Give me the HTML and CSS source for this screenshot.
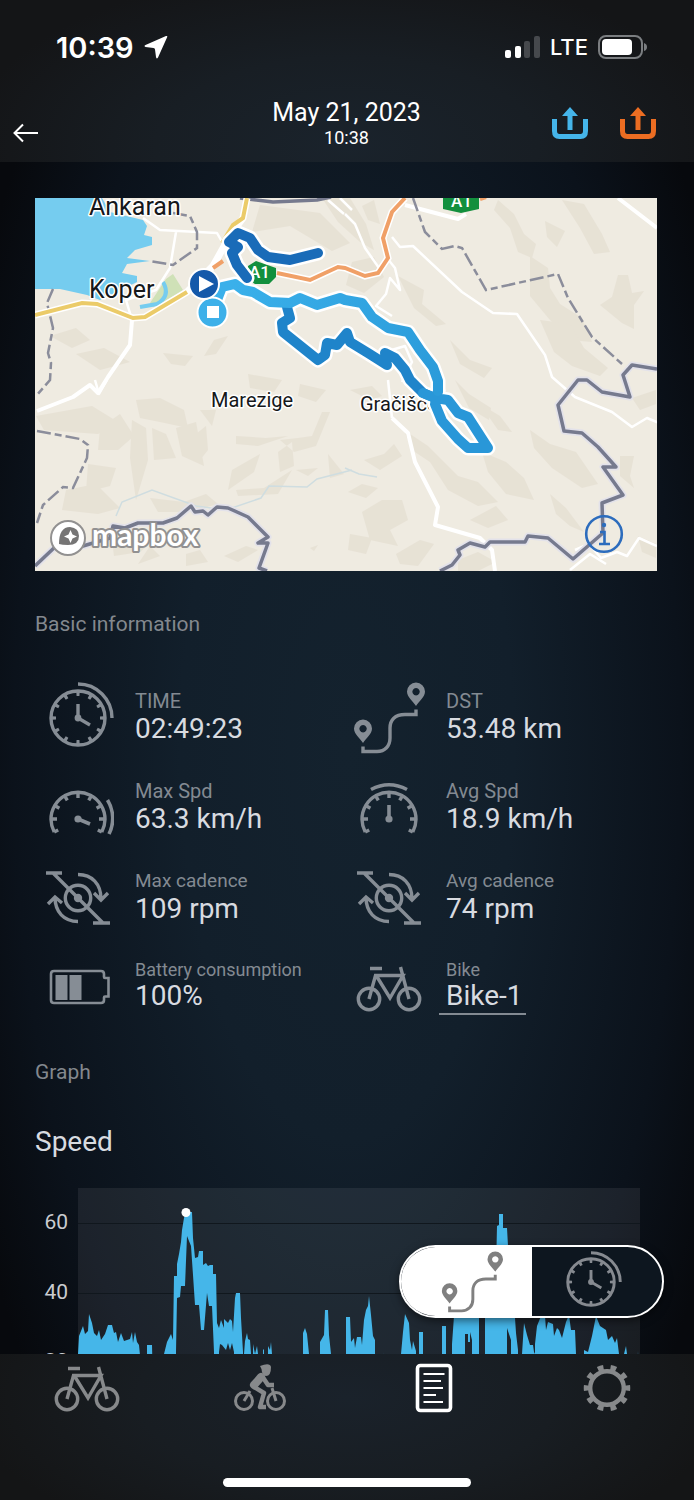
FILE: index.html
```html
<!DOCTYPE html>
<html lang="en">
<head>
  <meta charset="UTF-8">
  <title>Ride details</title>
  <meta name="viewport" content="width=device-width, initial-scale=1.0">
  <link rel="stylesheet" href="styles.css">
</head>
<body>

  <!-- Shared icons, all centred on 0,0 -->
  <svg class="sprite" aria-hidden="true">
    <symbol id="i-clock" viewBox="-36 -36 72 72">
      <circle r="27" fill="none" stroke="currentColor" stroke-width="3.4"/>
      <circle r="24" fill="none" stroke="currentColor" stroke-width="4" pathLength="120" stroke-dasharray="2.6 7.4" stroke-dashoffset="1.3"/>
      <path d="M0-14V0L12 7M0-34A34 34 0 0 1 34 0" fill="none" stroke="currentColor" stroke-width="3.4"/>
      <circle r="3.4" fill="currentColor"/>
    </symbol>
    <symbol id="i-dial" viewBox="-36 -36 72 72">
      <path d="M-23.8 24A27 27 0 1 1 23.8 24M-23.8 24l4-2M23.8 24l-4-2M-27 11h6M27 11h-6M-23.4-2.5l4.8 2.8M23.4-2.5l-4.8 2.8M-13.5-12.4l2.8 4.8M13.5-12.4l-2.8 4.8M0-16v6" fill="none" stroke="currentColor" stroke-width="3.4"/>
      <circle cy="11" r="3.6" fill="currentColor"/>
    </symbol>
    <symbol id="i-route" viewBox="-36 -36 72 72">
      <path d="M27-8.5V-3.5H16C6-3.5 1 2 1 10V20C1 28-4 33.5-12 33.5H-26V28.5" fill="none" stroke="currentColor" stroke-width="3.4"/>
      <path fill="currentColor" fill-rule="evenodd" d="M27-12C24-17 18-21 18-26.500A9 9 0 0 1 36-26.500C36-21 30-17 27-12ZM27-30a3.700 3.700 0 1 0 .1 0ZM-26 25C-29 20-35 16-35 10.500A9 9 0 0 1-17 10.500C-17 16-23 20-26 25ZM-26 7a3.700 3.700 0 1 0 .1 0Z"/>
    </symbol>
    <symbol id="i-cadence" viewBox="-36 -36 72 72">
      <g fill="none" stroke="currentColor" stroke-width="3.4">
        <circle r="12.700"/>
        <path d="M-32-25h16M-25-25L25 25M15 25h17M0-23.500C14-23.500 23-14 23 1M16-5l7 7 7-7M0 23.500C-14 23.500-23 14-23-1M-30 6l7-7 7 6"/>
      </g>
      <circle r="4.200" fill="currentColor"/>
    </symbol>
    <symbol id="i-battery" viewBox="-36 -36 72 72">
      <path d="M-24-17H23q3 0 3 3v3q0 1 1 1h3.500V8.500H27q-1 0-1 1V12q0 3-3 3H-24q-3 0-3-3V-14q0-3 3-3Z" fill="none" stroke="currentColor" stroke-width="2.600"/>
      <path d="M-22.500-13h12v25h-12zM-8.500-13h12v25h-12z" fill="currentColor"/>
    </symbol>
    <symbol id="i-bike" viewBox="-36 -36 72 72">
      <g fill="none" stroke="currentColor" stroke-width="3.400">
        <circle cx="-20" cy="11" r="10.700"/>
        <circle cx="20" cy="11" r="10.700"/>
        <path d="M-20 11L-13.500-12.500H14L1 10-12.500-12M11.500-21L20 11M-19-19.500h12"/>
      </g>
    </symbol>
    <symbol id="i-rider" viewBox="-36 -36 72 72">
      <g fill="none" stroke="currentColor" stroke-width="3">
        <circle cx="-16" cy="13" r="8.500"/>
        <circle cx="16" cy="13" r="8.500"/>
        <path d="M-16 13l6-10M16 13l-4-13"/>
      </g>
      <path d="M1-11L-6-3" stroke="currentColor" stroke-width="8" stroke-linecap="round"/>
      <path d="M-6-1L4 5 0 19h6M2-12l6 9h6" fill="none" stroke="currentColor" stroke-width="4.500" stroke-linejoin="round"/>
      <path d="M0-22q10-4 11 1 0 9-5 9-4 0-4.500-7Z" fill="currentColor"/>
    </symbol>
    <symbol id="i-list" viewBox="-36 -36 72 72">
      <rect x="-16.500" y="-22.500" width="33" height="45" rx="3" fill="none" stroke="currentColor" stroke-width="3.600"/>
      <path d="M-10.500-14h21M-10.500-7H7M-10.500 0H9M-10.500 7H2M-10.500 14H9" stroke="currentColor" stroke-width="1.800"/>
    </symbol>
    <symbol id="i-gear" viewBox="-36 -36 72 72">
      <circle r="16.800" fill="none" stroke="currentColor" stroke-width="4.400"/>
      <circle r="20.500" fill="none" stroke="currentColor" stroke-width="5.500" pathLength="100" stroke-dasharray="4.400 5.600" stroke-dashoffset="2.200"/>
    </symbol>
    <symbol id="i-share" viewBox="0 0 36 34">
      <path d="M2.500 13V25q0 5.500 5 5.500h21q5 0 5-5.500V13" fill="none" stroke="currentColor" stroke-width="5"/>
      <path d="M18 1l8 9h-5.500v14h-5V10H10z" fill="currentColor"/>
    </symbol>
  </svg>

  <header class="header">
    <div class="status">
      <div class="status-left">
        <span class="status-time">10:39</span>
        <svg class="location" viewBox="0 0 24 24"><path d="M22 1Q24 .5 23 2.500L14 22.500Q12.500 24.500 12 22L11 14.500Q11 13 9.500 13L1.500 12Q-.5 11 1.500 10Z" fill="#fff"/></svg>
      </div>
      <div class="status-right">
        <svg class="signal" viewBox="0 0 35 22">
          <rect y="14" width="6" height="8" rx="2" fill="#fff"/>
          <rect x="10" y="10" width="6" height="12" rx="2" fill="#fff"/>
          <rect x="19" y="5" width="6" height="17" rx="2" fill="#46494d"/>
          <rect x="29" width="6" height="22" rx="2" fill="#46494d"/>
        </svg>
        <span class="network">LTE</span>
        <svg class="charge" viewBox="0 0 50 24">
          <rect x="1" y="1" width="43" height="22" rx="7" fill="none" stroke="#7b7e81" stroke-width="2"/>
          <rect x="4" y="4" width="30" height="16" rx="4" fill="#fff"/>
          <path d="M46 8q3 1 3 4t-3 4z" fill="#7b7e81"/>
        </svg>
      </div>
    </div>
    <nav class="nav">
      <button class="back" aria-label="Back">
        <svg viewBox="0 0 26 20"><path d="M25 10H2M10 1.500L1.500 10 10 18.500" fill="none" stroke="#fff" stroke-width="2"/></svg>
      </button>
      <div class="nav-title">
        <h1>May 21, 2023</h1>
        <p>10:38</p>
      </div>
      <div class="nav-actions">
        <button class="share blue" aria-label="Share"><svg><use href="#i-share"/></svg></button>
        <button class="share orange" aria-label="Share to Strava"><svg><use href="#i-share"/></svg></button>
      </div>
    </nav>
  </header>

  <main class="content">
    <div class="map">
      <svg viewBox="35 198 622 373" role="img" aria-label="Map of the ride">
        <defs>
          <linearGradient id="ride" gradientUnits="userSpaceOnUse" x1="440" y1="380" x2="230" y2="290">
            <stop offset="0" stop-color="#2b9bda"/>
            <stop offset="1" stop-color="#3ab0ea"/>
          </linearGradient>
        </defs>
        <rect x="35" y="198" width="623" height="373" fill="#efebe1"/>

        <!-- Hills -->
        <g fill="#ddd5c5" opacity=".4">
          <path d="M260 205l60 8 30 30-18 8-42-25-38 6zM322 198h28l16 26 8 26-14-8-22-20zM352 262l22-5 10 20-20 16-18-8z"/>
          <path d="M498 200l16 14 10 20 12 10-4 14-14-6-8-24-16-18zM545 221l20 10-8 16-10-10zM562 200l22 4 18 30 8 18-16 2-14-26z"/>
          <path d="M618 275l10 0 4 18 12-2-10 14 0 24-12-6-22-18 12-8zM530 256l18 12 2 20 10 16 22 14 10 24-22-2-20-20-20-24z"/>
          <path d="M398 276l26 14-2 14 24 20-10 2-22-18zM540 320l30 4 14 24 24 20-8 8-28-10-18-14zM450 340l20 20 22 8-8 10-24-14z"/>
          <path d="M50 336l26-8 14 12-18 8zM76 354l28-6 26 14-30 8zM163 353l30 3-8 10-14-2zM214 340l14-4-12 18-12 2zM248 374l34 6-8 12-24-4z"/>
          <path d="M36 416l56-10 26 16-20 12-54-4zM100 428l20-14 14 22-16 14-20 0zM136 400l24-2 24 12 4 18-28-6-20-4z"/>
          <path d="M132 420l14 8 2 32-12 40-6-42zM152 428l14 6 10 24-22 2zM176 428l20-6 8 44-22-10zM196 434l10-8 2 24-8 10z"/>
          <path d="M200 410l16 0-4 16zM236 436l30 2 22-2-30 10-22-2zM280 440l14 12 22-6 14-34-8 0-10 24-14 2zM278 452l14-10 2 24-14 6z"/>
          <path d="M232 470l28-16-6 18-26 18zM236 490l28-2 28-18-14 24-40 2zM328 454l16 20-14 4zM296 470l22-2-10 8z"/>
          <path d="M88 464l28 4-6 18-24 6zM66 490l30-6 24 24-22 6-36-4zM150 498l34 4 22-8 12 10-30 8-30 0zM112 540l26 4 18-6-16 14-26 4z"/>
          <path d="M150 546l10 10-22 8zM186 554l14-4 8 12-22 4zM224 556l22-10 12 4-20 12zM310 548l8-3-4 6z"/>
          <path d="M404 430l24 16 30 30 20 6 20 20-20 4-30-16-18-28-18-12zM455 380l14 14 22 14-2 12-20-12zM482 452l24 10 18 16 10 22-28-6-18-22z"/>
          <path d="M480 404l20 12 12 16-14-2zM530 430l20 14 26 8 22 32-16 4-30-20-18-20zM550 494l16 14 18 24-14-6-14-12zM620 456l14 0-4 20 4 12-14-12z"/>
          <path d="M362 512l20-12 20 0 6 20-18 10 8 16-28-6zM350 534l22 4-6 16-18-4zM396 554l24-14 14 4-16 22-18-2zM458 560l20-8 18 10-18 9h-20z"/>
          <path d="M348 492l14-8 16 4-12 10zM364 460l20-6 10-10 8 12-22 14zM632 398l24-8 0 14-16 6zM638 536l18 8 0 14-14-6z"/>
          <path d="M350 390l22-4 10 10-12 4zM300 384l26 6-10 12-18-6zM470 520l26-14 12 14-20 8zM362 206l12-6 6 24-12-4z"/>
        </g>

        <!-- Sea and coast -->
        <path fill="#75ccef" d="M35 198h67l8 14 33 8 4 6-3 9 8 2v8l-17 5-8 8 23 3-23 3-5 9 15 3v6l-16 8-21 10-13-5-27-6H35z"/>
        <path fill="#cfe1b7" d="M150 303l16-24 7-5 10 16-18 11-12 6z"/>
        <path d="M163 282q8 14-6 22l-17 3" fill="none" stroke="#75ccef" stroke-width="4"/>

        <!-- Streams and minor roads -->
        <g fill="none" stroke="#cfdde0" stroke-width="1.500">
          <path d="M116 516l6-14 30-12 44 16 30 4 35-12 8-12 38 1 10-8 35-9M345 468l14 6 18 3"/>
        </g>
        <g fill="none" stroke="#fff" stroke-width="2.500" stroke-linejoin="round">
          <path d="M143 218l17 12 57 3 8 14M176 232l-6 36-14 22-30 10 6 20M392 237l8 10 13-1 49 46 31 21 24 1 28 41 7 22 23 20 37 15 20 15 15-9 12 5"/>
          <path d="M345 214l10 10 10 24 14 20 8-10 8 10 5 22-10-12-4 16-10 12 16 10M385 352l20-6 7 16-10 20M388 380l4 38"/>
          <path d="M340 198l12 12M575 550l14-6 12 14 16-6 10 4 12-18 18 8M570 570l20-16 16 10"/>
          <path d="M95 380l4 14 8-14M328 200l16 14"/>
        </g>
        <g fill="none" stroke="#fff" stroke-width="4" stroke-linejoin="round">
          <path d="M132 320l-2 25-22 32-10 16-8-8-17 12-36 14M405 205l53 14 8-5M618 198l39 30M392 418l16 15 7 29 23 45-3 18 45 13 12 12 3 21"/>
        </g>

        <!-- Administrative borders -->
        <g fill="none" stroke="#8b8d9b" stroke-width="2.500" stroke-dasharray="14 4 7 4">
          <path d="M173 213l17 3 7 16v16l-24 17-23-4M53 289l-6 14 6 25-5 25 3 10-1 17-13 15M37 431l43 8 8 6-1 13-14 30-10-1-20 18-6 18"/>
          <path d="M413 198l12 34 17 17 13-3 7 2 24 42 72-16 10 24 24 39 30 27"/>
        </g>
        <g fill="none" stroke-linejoin="round">
          <path stroke="#e3e2ea" stroke-width="7" d="M35 566l20-19 28-1 27-8 3-12 12 2 13-5 25 0 14-5 14-12 4 6 8-1 5 4 9-8 11 1 20 9 20 20-10 6h10l-9 25 8 3M440 571l12-6 8-10-2-5 12-7 15 4 5-5h35l3-6 20 2 25 21 30-26-1-30 21-8-20-28h13l-18-20-16-14-18-2-6-26 20-25h9l15 12 28 5-7-22 9-10 25 4"/>
          <path stroke="#767a8e" stroke-width="3.500" d="M35 566l20-19 28-1 27-8 3-12 12 2 13-5 25 0 14-5 14-12 4 6 8-1 5 4 9-8 11 1 20 9 20 20-10 6h10l-9 25 8 3M440 571l12-6 8-10-2-5 12-7 15 4 5-5h35l3-6 20 2 25 21 30-26-1-30 21-8-20-28h13l-18-20-16-14-18-2-6-26 20-25h9l15 12 28 5-7-22 9-10 25 4M240 198l33 4 44-2 14-3"/>
        </g>

        <!-- Main roads -->
        <g fill="none" stroke="#fff" stroke-width="7">
          <path d="M35 315l47-12 15 1 36 14 12-1 42-25 26-26 18-32 12-16 4-20M277 273l33 7 28-13 7 1 20 8 13-3 10-15-5-20 9-26 13-14"/>
        </g>
        <path d="M35 315l47-12 15 1 36 14 12-1 42-25M222 243l11-18 10-7 4-20" fill="none" stroke="#ebcb69" stroke-width="4"/>
        <path d="M213 268l10-7M277 273l33 7 28-13 7 1 20 8 13-3 10-15-5-20 9-26 13-14M480 199l6-2" fill="none" stroke="#f0a067" stroke-width="4"/>

        <path d="M248 266l8-5 20 7v9l-7 7h-14l-8-5zM443 198h36v11l-18 4-18-4z" fill="#128f3d"/>
        <g class="shield">
          <text x="249" y="278">A1</text>
          <text x="451" y="207">A1</text>
        </g>

        <g class="places">
          <text class="town" x="89" y="215">Ankaran</text>
          <text class="town" x="89" y="298">Koper</text>
          <text x="211" y="407">Marezige</text>
          <text x="360" y="411">Gračišče</text>
        </g>

        <!-- Ride track -->
        <g fill="none" stroke-linejoin="round" stroke-linecap="round">
          <g stroke="#fff" stroke-width="15">
            <path d="M318 253l-28 7-22-3-10-7-8-12-12-5-9 9 9 5-6 6 5 12 10 13"/>
            <path d="M287 307l3 11-8 5 1 9 35 28 7-5 2-12 10 2 10-12 3 9 18 11 19 12-2-12 10 5 10 12 5 10 13 13 12 5 13 2 10 13 10 4 20 31h-20l-10-9-16-18-7-17 3-13"/>
            <path d="M438 391V381L433 367 420 350 408 332 388 328 372 317 362 303 345 300 340 298 317 305 300 298 290 303 270 302 253 292 243 290 235 284 222 287 217 300 212 312"/>
          </g>
          <path stroke="#196bb8" stroke-width="10" d="M318 253l-28 7-22-3-10-7-8-12-12-5-9 9 9 5-6 6 5 12 10 13"/>
          <path stroke="#1f84ca" stroke-width="10" d="M287 307l3 11-8 5 1 9 35 28 7-5 2-12 10 2 10-12 3 9 18 11 19 12-2-12 10 5 10 12 5 10 13 13 12 5"/>
          <path stroke="#2997d8" stroke-width="10" d="M423 393l12 5 13 2 10 13 10 4 20 31h-20l-10-9-16-18-7-17 3-13"/>
          <path stroke="url(#ride)" stroke-width="10" d="M438 391V381L433 367 420 350 408 332 388 328 372 317 362 303 345 300 340 298 317 305 300 298 290 303 270 302 253 292 243 290 235 284 222 287 217 300 212 312"/>
        </g>
        <circle cx="212.500" cy="312.500" r="15" fill="#3db0e9" stroke="#fff" stroke-width="2"/>
        <path d="M207 306h12v12h-12z" fill="#fff"/>
        <circle cx="204" cy="284" r="15" fill="#1459aa" stroke="#fff" stroke-width="2"/>
        <path d="M199 276l15 8-15 8z" fill="#fff"/>

        <!-- Attribution -->
        <circle cx="68" cy="538" r="17" fill="#fff" stroke="#929191" stroke-width="2"/>
        <path d="M59 544q0-17 11-17 9 1 9 9 0 9-11 9-6 0-9-1z" fill="#767575"/>
        <path d="M70.500 530l2 4.500 4.500 2-4.500 2-2 4.500-2-4.500-4.500-2 4.500-2z" fill="#fff"/>
        <text class="mapbox" x="92" y="546">mapbox</text>
      </svg>
      <button class="map-info" aria-label="Map information">
        <svg viewBox="0 0 40 40">
          <circle cx="20" cy="20" r="17.800" fill="none" stroke="currentColor" stroke-width="2.600"/>
          <circle cx="20" cy="11" r="2.200" fill="currentColor"/>
          <path d="M16 18h4.500v11M15 30h11" fill="none" stroke="currentColor" stroke-width="2.600"/>
        </svg>
      </button>
    </div>

    <section>
      <h2>Basic information</h2>
      <dl class="stats">
        <div class="stat">
          <svg><use href="#i-clock"/></svg>
          <div class="stat-text"><dt>TIME</dt><dd>02:49:23</dd></div>
        </div>
        <div class="stat">
          <svg><use href="#i-route"/></svg>
          <div class="stat-text"><dt>DST</dt><dd>53.48 km</dd></div>
        </div>
        <div class="stat">
          <svg viewBox="-36 -36 72 72">
            <use href="#i-dial" x="-36" y="-36" width="72" height="72"/>
            <path d="M0 11l12 5M29.500-8A35 35 0 0 1 31 26" fill="none" stroke="currentColor" stroke-width="3.600"/>
          </svg>
          <div class="stat-text"><dt>Max Spd</dt><dd>63.3 km/h</dd></div>
        </div>
        <div class="stat">
          <svg viewBox="-36 -36 72 72">
            <use href="#i-dial" x="-36" y="-36" width="72" height="72"/>
            <path d="M0 11V-3M-18-18.500Q0-28 18-18.500" fill="none" stroke="currentColor" stroke-width="3.600"/>
          </svg>
          <div class="stat-text"><dt>Avg Spd</dt><dd>18.9 km/h</dd></div>
        </div>
        <div class="stat cadence">
          <svg><use href="#i-cadence"/></svg>
          <div class="stat-text"><dt>Max cadence</dt><dd>109 rpm</dd></div>
        </div>
        <div class="stat cadence">
          <svg><use href="#i-cadence"/></svg>
          <div class="stat-text"><dt>Avg cadence</dt><dd>74 rpm</dd></div>
        </div>
        <div class="stat small">
          <svg><use href="#i-battery"/></svg>
          <div class="stat-text"><dt>Battery consumption</dt><dd>100%</dd></div>
        </div>
        <div class="stat small">
          <svg><use href="#i-bike"/></svg>
          <div class="stat-text"><dt>Bike</dt><dd><a href="#bike">Bike-1</a></dd></div>
        </div>
      </dl>
    </section>

    <section class="graph">
      <h2>Graph</h2>
      <h3>Speed</h3>
      <svg class="chart" viewBox="35 1188 622 200" role="img" aria-label="Speed over distance">
        <rect class="plot" x="78" y="1188" width="562" height="200"/>
        <path d="M78 1223.500h562M78 1293.500h562M78 1363.500h562" stroke="#10171d" stroke-width="1"/>
        <g class="axis">
          <text x="68" y="1229">60</text>
          <text x="68" y="1299">40</text>
          <text x="68" y="1368">20</text>
        </g>
        <g fill="#45b6e9">
          <path d="M78 1388v-34l1-18 4-10 2 8 3-3 1-17 3 9 2 10 3 3 2-6 2 10 4-6 3-9h4l2 8 2-1 2 10 3-9 3 8 6-2 2-7 1 11 2-11 2 10 2 3 1 10v34z"/>
          <path d="M147 1388v-43h5l1 43zM164 1388v-34l3-12 2-4 2-4 2 6 1-64h3v-12l2-10 2-12 1-12 2-12 2-6h6l1 26 2 20 3-1 1-6h4v14l3-2 2 3 2-1h3v9h3l1 49 2 5 2-8 3 8v-9l4 4 2-4 2 2 1 11 2-34 1-5h4l1 25 2 34v34h-9v-34l-2-9-2 7-2-7-2 7-4-5-2-1-1 8v34h-5v-34l-2-46h-3l-2-13-3 37h-3l-2-25h-4l-2-30-2-29-4-10-2 50h-4l-1 11-3 1-1 54v34z"/>
          <path d="M244 1388v-34l1-13 2-8 1 6 2 1 1 14v34zM253 1388v-44l2 10 2-8 1 8 1 34zM263 1388v-38l1-1v39zM268 1388v-42l2 4 1-8 1 12v34zM303 1388v-55l2-5 2 6 2 20v34zM320 1388v-46l4-7 1-25h3l1 25 2 19v34z"/>
          <path d="M346 1388v-71h4l1 25 3-4 1 10 2-11h4l1 8 2-25 2-10 2-4 1-10 2 19 2 21 2 4v48zM383 1388v-36l1 36zM401 1388v-34l2-22 2-18 4 9 1 17 2 10 1-9 3 10v37zM419 1388v-56h4v56zM442 1388v-62h4v62z"/>
          <path d="M452 1388v-44l2-28h25v72h-7v-48l-2-8v10h-2v-8h-3v24h-1v30zM485 1388v-72h10l2-90 2-1v-11h4v14h4l1 18 1 70 6 2 1 15 2 17v38h-7v-48l-4-12v60z"/>
          <path d="M522 1388v-34l2-31 3 12 3 10h3l1 7 1 2v-10l2-18 4-10h4l1 14 2-8 5 2 1 12 3-8 2 2 3 8 4-16 3-7 2 15h4l1 24v34zM579 1388v-36l1 36zM584 1388v-38l4 2 4-16 4-20 4 10 6 4 2 10 4-4 3 7 2-5 2 16v34zM624 1388v-34l2-8 1 8v34zM637 1388l1-37 1 37z"/>
        </g>
        <circle cx="186" cy="1212.500" r="4.500" fill="#fff"/>
      </svg>
    </section>
  </main>

  <footer class="footer">
    <div class="mode" role="group" aria-label="Graph axis">
      <button class="distance active" aria-label="Distance" aria-pressed="true"><svg><use href="#i-route"/></svg></button>
      <button class="time" aria-label="Time" aria-pressed="false"><svg><use href="#i-clock"/></svg></button>
    </div>
    <nav class="tabs">
      <a href="#bike" aria-label="Bike"><svg><use href="#i-bike"/></svg></a>
      <a href="#ride" aria-label="Ride"><svg><use href="#i-rider"/></svg></a>
      <a href="#log" class="current" aria-label="Log"><svg><use href="#i-list"/></svg></a>
      <a href="#settings" aria-label="Settings"><svg><use href="#i-gear"/></svg></a>
    </nav>
    <div class="home-bar"></div>
  </footer>

</body>
</html>
```
FILE: styles.css
```css
* {
  box-sizing: border-box;
}

body {
  margin: 0;
  height: 100vh;
  overflow: hidden;
  display: flex;
  flex-direction: column;
  background: radial-gradient(ellipse 60% 65% at 50% 50%, #14222e 0%, #121f2b 40%, #0b121b 80%, #07090d 100%);
  font-family: Roboto, sans-serif;
  color: #d8dbe0;
}

h1, h2, h3, p, dl, dd {
  margin: 0;
  font-weight: 400;
}

button {
  padding: 0;
  border: none;
  background: none;
  color: inherit;
  cursor: pointer;
}

svg {
  display: block;
}

.sprite {
  position: absolute;
  width: 0;
  height: 0;
}

/* Status bar and title */
.header {
  flex: none;
  padding-top: 28px;
  background: radial-gradient(ellipse 55% 110% at 50% 90%, #1a232c 0%, #181e24 50%, #141517 100%);
  color: #fff;
}

.status {
  display: flex;
  justify-content: space-between;
  align-items: center;
  height: 38px;
  padding: 0 46px 0 56px;
}

.status-left, .status-right {
  display: flex;
  align-items: center;
  gap: 10px;
  font-family: Inter, sans-serif;
}

.status-time {
  font-size: 29px;
  font-weight: 600;
}

.location {
  width: 24px;
  height: 24px;
}

.signal {
  width: 35px;
  height: 22px;
}

.network {
  font-size: 22px;
  font-weight: 500;
}

.charge {
  width: 50px;
  height: 24px;
}

.nav {
  display: grid;
  grid-template-columns: 1fr auto 1fr;
  align-items: center;
  height: 96px;
  padding: 18px 38px 0 13px;
}

.nav-title {
  text-align: center;
  padding-left: 24px;
}

.nav-title h1 {
  font-size: 25px;
  line-height: 30px;
}

.nav-title p {
  font-size: 18px;
  line-height: 20px;
}

.back {
  justify-self: start;
  margin-top: 20px;
}

.back svg {
  width: 26px;
  height: 20px;
}

.nav-actions {
  display: flex;
  justify-content: flex-end;
  gap: 32px;
}

.share svg {
  width: 36px;
  height: 34px;
}

.blue {
  color: #45b5ea;
}

.orange {
  color: #ec6d22;
}

.content {
  flex: 1;
  min-height: 0;
  overflow: hidden;
  padding: 36px 37px 0 35px;
}

.map {
  position: relative;
}

.map > svg {
  width: 100%;
}

.places text {
  font-size: 20px;
  fill: #15171a;
  stroke: #fff;
  stroke-width: 3px;
  stroke-linejoin: round;
  paint-order: stroke;
}

.places .town {
  font-size: 25px;
}

.shield text {
  font-size: 17px;
  font-weight: 500;
  fill: #fff;
}

.mapbox {
  font-family: Lato, sans-serif;
  font-size: 30px;
  font-weight: 700;
  fill: #fff;
  stroke: #929191;
  stroke-width: 4px;
  stroke-linejoin: round;
  paint-order: stroke;
}

.map-info {
  position: absolute;
  right: 33px;
  bottom: 17px;
  color: #2c6cbd;
}

.map-info svg {
  width: 40px;
  height: 40px;
}

h2 {
  margin: 40px 0 36px;
  font-size: 21px;
  line-height: 26px;
  color: #83888e;
}

h3 {
  font-size: 28px;
  line-height: 34px;
  margin-bottom: 29px;
}

.stats {
  display: grid;
  grid-template-columns: 1fr 1fr;
  grid-auto-rows: 90px;
}

.stat {
  display: flex;
  align-items: center;
  gap: 21px;
  padding-left: 7px;
}

.stat svg {
  flex: none;
  width: 72px;
  height: 72px;
  color: #868d95;
}

.stat-text {
  padding-bottom: 2px;
}

dt {
  font-size: 20px;
  line-height: 24px;
  color: #838a92;
}

dd {
  font-size: 28px;
  line-height: 32px;
}

.cadence dt {
  font-size: 19px;
}

.small .stat-text {
  padding-bottom: 7px;
}

.small dt {
  font-size: 18px;
  line-height: 22px;
}

.small dd {
  line-height: 30px;
}

dd a {
  display: block;
  margin: 0 -3px -4px -7px;
  padding: 0 3px 2px 7px;
  border-bottom: 2px solid #838a92;
  color: inherit;
  text-decoration: none;
}

.graph h2 {
  margin: 26px 0 40px;
}

.chart {
  width: 100%;
}

.plot {
  fill: #fff;
  fill-opacity: 0.07;
}

.axis text {
  font-size: 21px;
  fill: #c9ccd0;
  text-anchor: end;
}

/* Bottom bar */
.footer {
  position: relative;
  flex: none;
  height: 146px;
  display: flex;
  flex-direction: column;
  justify-content: space-between;
  align-items: center;
  padding-bottom: 13px;
  background: radial-gradient(ellipse 55% 110% at 50% 30%, #1a222b 0%, #181d22 55%, #141516 100%);
}

.tabs {
  display: grid;
  grid-template-columns: repeat(4, 1fr);
  justify-items: center;
  width: 100%;
  margin-top: -2px;
}

.tabs a {
  color: #87898b;
}

.tabs .current {
  color: #fff;
}

.tabs svg {
  width: 72px;
  height: 72px;
}

.home-bar {
  width: 248px;
  height: 9px;
  border-radius: 5px;
  background: #fff;
}

/* Distance / time switch floating above the chart */
.mode {
  position: absolute;
  right: 30px;
  bottom: 182px;
  display: flex;
  width: 265px;
  height: 73px;
  overflow: hidden;
  border: 2px solid #fff;
  border-radius: 37px;
  background: #0d161f;
  box-shadow: 0 3px 8px rgba(0, 0, 0, 0.5);
}

.mode button {
  flex: 1;
  display: flex;
  justify-content: center;
  align-items: center;
  color: #868a90;
}

.mode button svg {
  width: 62px;
  height: 62px;
}

.mode .active {
  background: #fff;
  color: #808080;
}

.mode .distance {
  padding-left: 12px;
}

.mode .time {
  padding-right: 12px;
}
```
